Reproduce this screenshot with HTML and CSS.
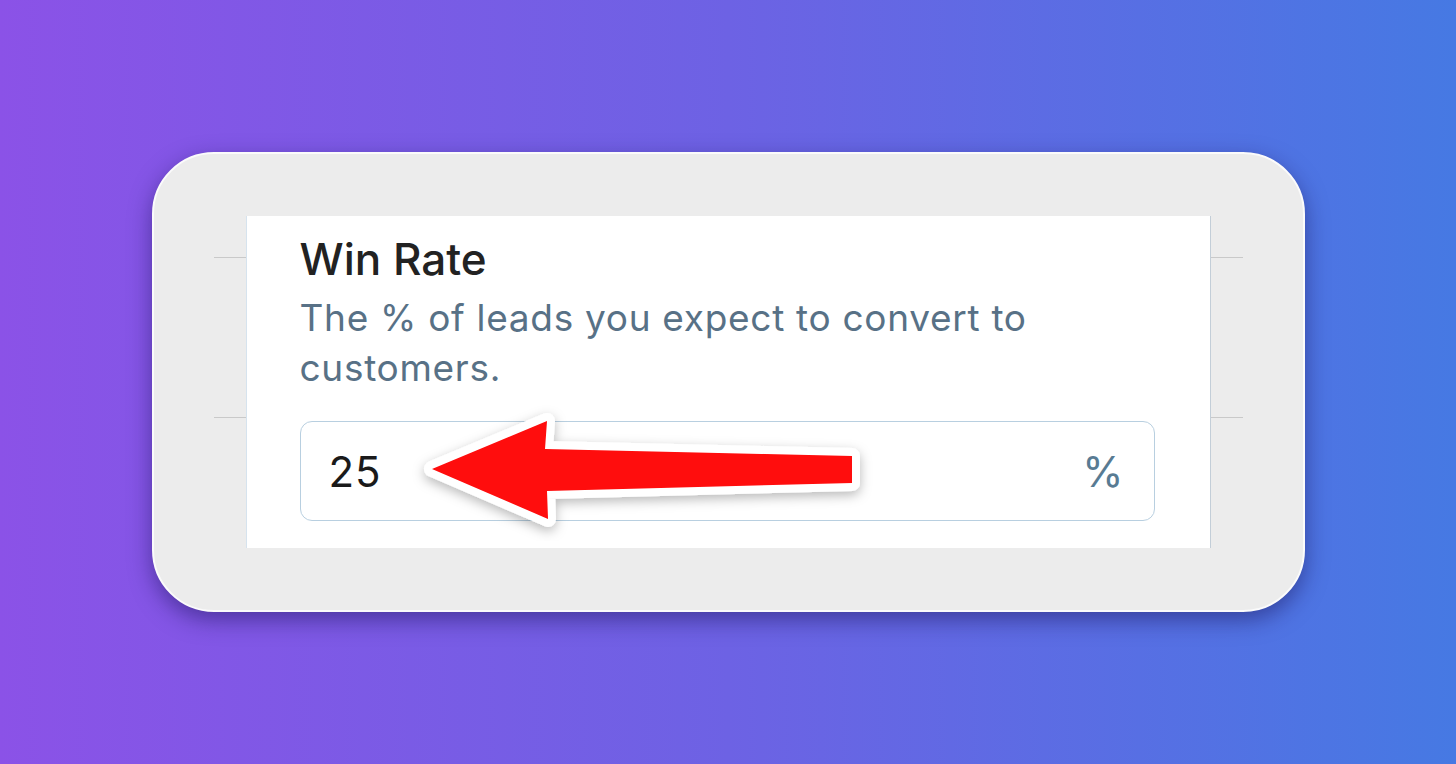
FILE: index.html
```html
<!DOCTYPE html>
<html lang="en">
  <head>
    <meta charset="UTF-8" />
    <meta name="viewport" content="width=device-width, initial-scale=1.0" />
    <title>Win Rate</title>
    <link rel="stylesheet" href="styles.css">
  </head>
  <body>
    <div class="frame">
      <div class="rules">
        <div class="rule rule-top"></div>
        <div class="rule rule-bottom"></div>
      </div>

      <div class="panel">
        <h2 class="field-title">Win Rate</h2>
        <p class="field-help">
          The % of leads you expect to convert to customers.
        </p>

        <div class="input-box">
          <span class="input-value">25</span>
          <span class="input-unit">%</span>
        </div>

        <!-- pointer sticker on top of the field -->
        <svg class="pointer" width="470" height="140" viewBox="0 0 470 140">
          <defs>
            <filter id="soft" x="-10%" y="-30%" width="120%" height="160%">
              <feDropShadow dx="0" dy="4" stdDeviation="6" flood-color="#000" flood-opacity="0.28" />
            </filter>
          </defs>
          <polygon
            points="22,68 137,20 135,48 442,55 442,82 137,90 138,118"
            fill="#ff0a0a"
            stroke="#ffffff"
            stroke-width="16"
            stroke-linejoin="round"
            paint-order="stroke"
            filter="url(#soft)"
          />
        </svg>
      </div>

      <div class="rules">
        <div class="rule rule-top"></div>
        <div class="rule rule-bottom"></div>
      </div>
    </div>
  </body>
</html>
```

FILE: styles.css
```css
html,
body {
  height: 100%;
}
body {
  margin: 0;
  display: flex;
  align-items: center;
  justify-content: center;
  font-family: Inter, "Liberation Sans", sans-serif;
  background: linear-gradient(90deg, #8b52e7 0%, #6d62e4 50%, #4679e3 100%);
}
.frame {
  box-sizing: border-box;
  width: 1153px;
  height: 460px;
  padding: 62px 60px;
  display: flex;
  background: #ececec;
  border: 2px solid #fbfbfb;
  border-radius: 62px;
  box-shadow: 0 8px 22px rgba(25, 20, 90, 0.5);
}
.rules {
  width: 32px;
  flex: none;
}
.rule {
  height: 1px;
  background: #c9c9c9;
}
.rule-top {
  margin-top: 41px;
}
.rule-bottom {
  margin-top: 159px;
}
.panel {
  position: relative;
  flex: 1;
  box-sizing: border-box;
  padding: 17px 55px 0 53px;
  background: #fff;
  border-left: 1px solid #d6e3ee;
  border-right: 1px solid #c3ced8;
}
.field-title {
  margin: 0;
  font-size: 44px;
  font-weight: 500;
  line-height: 52px;
  color: #222;
}
.field-help {
  margin: 8px 0 0;
  font-size: 37px;
  line-height: 50px;
  color: #587186;
  letter-spacing: 0.7px;
}
.input-box {
  box-sizing: border-box;
  height: 100px;
  margin-top: 28px;
  padding: 0 30px 0 28px;
  display: flex;
  align-items: center;
  justify-content: space-between;
  border: 1px solid #b8cfe0;
  border-radius: 12px;
  font-size: 42px;
}
.input-value {
  color: #1a1a1a;
  letter-spacing: 1px;
}
.input-unit {
  color: #587b93;
}
.pointer {
  position: absolute;
  left: 163px;
  top: 185px;
}
```
